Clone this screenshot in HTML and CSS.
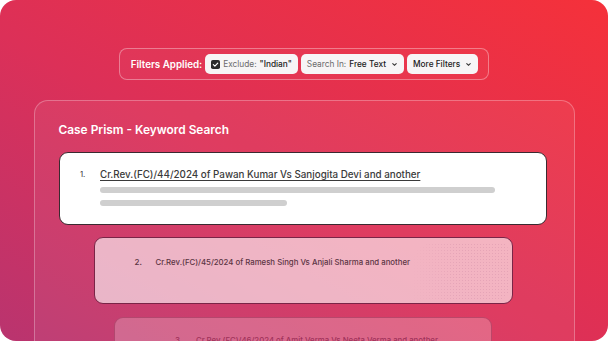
FILE: index.html
```html
<!DOCTYPE html>
<html lang="en">
  <head>
    <meta charset="UTF-8" />
    <meta name="viewport" content="width=device-width, initial-scale=1.0" />
    <title>Case Prism - Keyword Search</title>
    <link rel="stylesheet" href="styles.css">
  </head>
  <body>
    <div class="frame">
      <div class="filters">
        <span class="filters-label">Filters Applied:</span>
        <span class="chip">
          <svg class="check" viewBox="0 0 10 10" width="9" height="9">
            <rect x="0" y="0" width="10" height="10" rx="2" fill="#2b2b2b" />
            <path d="M2.6 5.2 L4.3 6.8 L7.5 3.4" stroke="#fff" stroke-width="1.3" fill="none" stroke-linecap="round" stroke-linejoin="round" />
          </svg>
          <span class="muted">Exclude:</span> <b>"Indian"</b>
        </span>
        <span class="chip">
          <span class="muted">Search In:</span> <b>Free Text</b>
          <svg class="caret" viewBox="0 0 8 8" width="7" height="7">
            <path d="M2 3 L4 5 L6 3" stroke="#333" stroke-width="1.2" fill="none" stroke-linecap="round" />
          </svg>
        </span>
        <span class="chip">
          <b>More Filters</b>
          <svg class="caret" viewBox="0 0 8 8" width="7" height="7">
            <path d="M2 3 L4 5 L6 3" stroke="#333" stroke-width="1.2" fill="none" stroke-linecap="round" />
          </svg>
        </span>
      </div>

      <div class="panel">
        <h1>Case Prism - Keyword Search</h1>
        <div class="stack">
          <div class="result first">
            <div class="result-head">
              <span class="num">1.</span>
              <a class="case" href="#">Cr.Rev.(FC)/44/2024 of Pawan Kumar Vs Sanjogita Devi and another</a>
            </div>
            <div class="line long"></div>
            <div class="line short"></div>
          </div>
          <div class="result second">
            <div class="result-head">
              <span class="num">2.</span>
              <span class="case">Cr.Rev.(FC)/45/2024 of Ramesh Singh Vs Anjali Sharma and another</span>
            </div>
          </div>
          <div class="result third">
            <div class="result-head">
              <span class="num">3.</span>
              <span class="case">Cr.Rev.(FC)/46/2024 of Amit Verma Vs Neeta Verma and another</span>
            </div>
          </div>
        </div>
      </div>
    </div>
  </body>
</html>
```

FILE: styles.css
```css
* {
  box-sizing: border-box;
}
body {
  margin: 0;
  background: #fff;
  font-family: Inter, "Noto Sans", sans-serif;
}
.frame {
  width: 608px;
  height: 341px;
  border-radius: 16px;
  overflow: hidden;
  background: linear-gradient(to top right, #b9346f 0%, #dc3058 45%, #f5313a 100%);
  display: flex;
  flex-direction: column;
  align-items: center;
}
.frame > * {
  flex-shrink: 0;
}

/* filter bar */
.filters {
  margin-top: 48px;
  height: 32px;
  display: flex;
  align-items: center;
  gap: 3px;
  padding: 0 10px 0 11px;
  border: 1px solid rgba(255, 255, 255, 0.35);
  border-radius: 8px;
  background: rgba(255, 255, 255, 0.03);
}
.filters-label {
  color: #fff;
  font-size: 9.8px;
  font-weight: 600;
}
.chip {
  height: 20px;
  display: flex;
  align-items: center;
  gap: 3px;
  padding: 0 6px;
  background: #f7f5f6;
  border-radius: 5px;
  font-size: 8.3px;
  color: #222;
  white-space: pre;
}
.chip:first-of-type {
  gap: 2px;
  padding: 0 5px;
}
.chip b {
  font-weight: 500;
}
.muted {
  color: #6b6b6b;
}
.check {
  display: block;
}
.caret {
  display: block;
  margin-left: 2px;
}

/* main panel */
.panel {
  margin-top: 20px;
  width: 541px;
  height: 260px;
  border: 1px solid rgba(255, 255, 255, 0.28);
  border-bottom: none;
  border-radius: 14px 14px 0 0;
  background: rgba(255, 255, 255, 0.06);
  padding: 21px 26px 0 24px;
}
.panel h1 {
  margin: 0 0 14px;
  color: #fff;
  font-size: 11.9px;
  font-weight: 600;
  line-height: 16px;
}
.stack {
  display: flex;
  flex-direction: column;
  align-items: center;
}
.result {
  position: relative;
  border-radius: 9px;
  flex-shrink: 0;
  overflow: hidden;
}
.result-head {
  display: flex;
  align-items: center;
}
.first {
  width: 488px;
  height: 73px;
  background: #fff;
  border: 1px solid #3a2a30;
  padding: 16px 20px 0 20px;
}
.first .num {
  width: 20px;
  font-size: 7.5px;
  font-weight: 500;
  color: #4a4a4a;
}
.first .case {
  font-size: 9.8px;
  font-weight: 500;
  color: #3a3a3a;
  text-decoration: underline;
  text-underline-offset: 2px;
}
.line {
  height: 6px;
  border-radius: 3px;
  background: #cfcfcf;
  margin-left: 20px;
}
.line.long {
  width: 395px;
  margin-top: 7px;
}
.line.short {
  width: 187px;
  margin-top: 7px;
}
.second {
  width: 419px;
  height: 67px;
  margin-top: 12px;
  background: rgba(255, 255, 255, 0.62);
  border: 1px solid #7a2447;
  padding: 19px 20px 0 40px;
}
/* faint dotted glass texture on the right of the second card */
.second::after {
  content: "";
  position: absolute;
  top: 5px;
  right: 4px;
  bottom: 4px;
  width: 95px;
  border-radius: 20px 6px 6px 0;
  background-image: radial-gradient(rgba(200, 130, 160, 0.3) 0.5px, transparent 0.9px);
  background-size: 3px 3px;
  -webkit-mask-image: linear-gradient(to right, transparent, #000 45%);
  mask-image: linear-gradient(to right, transparent, #000 45%);
}
.second .num,
.third .num {
  width: 21px;
  font-size: 8px;
  font-weight: 500;
}
.second .num,
.second .case {
  color: #5b3443;
}
.second .case,
.third .case {
  font-size: 7.8px;
  font-weight: 500;
}
.third {
  width: 378px;
  height: 60px;
  margin-top: 13px;
  background: rgba(255, 255, 255, 0.22);
  border: 1px solid rgba(140, 30, 70, 0.45);
  padding: 17px 20px 0 60px;
}
.third .num,
.third .case {
  color: #a0325a;
}
```
